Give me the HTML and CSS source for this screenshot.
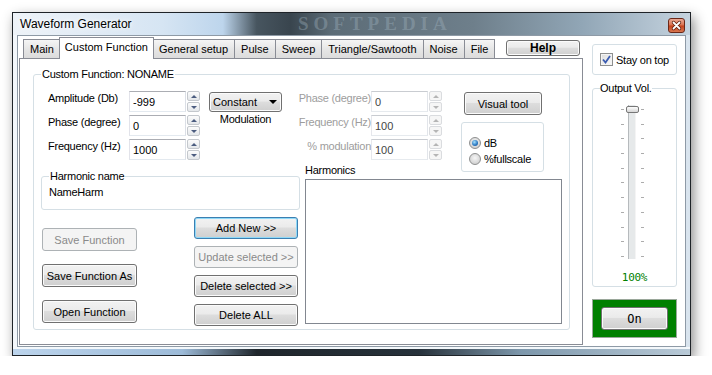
FILE: index.html
```html
<!DOCTYPE html>
<html lang="en">
<head>
    <meta charset="UTF-8">
    <meta name="viewport" content="width=device-width, initial-scale=1.0">
    <title>Waveform Generator</title>
    <link rel="stylesheet" href="styles.css">
</head>
<body>
    <div class="window">
        <div class="titlebar">
            <span class="title">Waveform Generator</span>
            <span class="watermark">SOFTPEDIA</span>
            <button class="close" title="Close">
                <svg width="15" height="13" viewBox="0 0 15 13">
                    <path d="M4.5 3.5 L10.5 9.5 M10.5 3.5 L4.5 9.5" stroke="#5a1c0c" stroke-width="3.2" stroke-linecap="round"/>
                    <path d="M4.5 3.5 L10.5 9.5 M10.5 3.5 L4.5 9.5" stroke="#fff" stroke-width="1.8" stroke-linecap="round"/>
                </svg>
            </button>
        </div>

        <div class="client">
            <div class="tabctl">
                <div class="tabstrip">
                    <span class="tab">Main</span>
                    <span class="tab active">Custom Function</span>
                    <span class="tab">General setup</span>
                    <span class="tab">Pulse</span>
                    <span class="tab">Sweep</span>
                    <span class="tab">Triangle/Sawtooth</span>
                    <span class="tab">Noise</span>
                    <span class="tab">File</span>
                    <button class="btn help">Help</button>
                </div>

                <div class="page">
                    <fieldset class="group func-group">
                        <legend>Custom Function: NONAME</legend>

                        <div class="top">
                            <div class="params">
                                <div class="param">
                                    <label>Amplitude (Db)</label>
                                    <input type="text" value="-999">
                                    <span class="spin"><i class="up"></i><i class="down"></i></span>
                                </div>
                                <div class="param">
                                    <label>Phase (degree)</label>
                                    <input type="text" value="0">
                                    <span class="spin"><i class="up"></i><i class="down"></i></span>
                                </div>
                                <div class="param">
                                    <label>Frequency (Hz)</label>
                                    <input type="text" value="1000">
                                    <span class="spin"><i class="up"></i><i class="down"></i></span>
                                </div>
                            </div>

                            <div class="modcol">
                                <button class="btn combo">Constant <i class="arrow"></i></button>
                                <span class="caption">Modulation</span>
                            </div>

                            <div class="params mod-params">
                                <div class="param">
                                    <label>Phase (degree)</label>
                                    <input type="text" value="0" disabled>
                                    <span class="spin"><i class="up"></i><i class="down"></i></span>
                                </div>
                                <div class="param">
                                    <label>Frequency (Hz)</label>
                                    <input type="text" value="100" disabled>
                                    <span class="spin"><i class="up"></i><i class="down"></i></span>
                                </div>
                                <div class="param">
                                    <label>% modulation</label>
                                    <input type="text" value="100" disabled>
                                    <span class="spin"><i class="up"></i><i class="down"></i></span>
                                </div>
                            </div>

                            <div class="viewcol">
                                <button class="btn visual">Visual tool</button>
                                <div class="box radios">
                                    <div class="radio checked"><span class="dot"></span>dB</div>
                                    <div class="radio"><span class="dot"></span>%fullscale</div>
                                </div>
                            </div>
                        </div>

                        <div class="bottom">
                            <div class="leftpart">
                                <fieldset class="group name-group">
                                    <legend>Harmonic name</legend>
                                    NameHarm
                                </fieldset>
                                <div class="actions">
                                    <div class="file-btns">
                                        <button class="btn" disabled>Save Function</button>
                                        <button class="btn">Save Function As</button>
                                        <button class="btn">Open Function</button>
                                    </div>
                                    <div class="harm-btns">
                                        <button class="btn default">Add New &gt;&gt;</button>
                                        <button class="btn" disabled>Update selected &gt;&gt;</button>
                                        <button class="btn">Delete selected &gt;&gt;</button>
                                        <button class="btn">Delete ALL</button>
                                    </div>
                                </div>
                            </div>
                            <div class="harmonics">
                                <span class="caption">Harmonics</span>
                                <div class="listbox"></div>
                            </div>
                        </div>
                    </fieldset>
                </div>
            </div>

            <div class="side">
                <div class="box stay">
                    <span class="check">
                        <svg width="11" height="11" viewBox="0 0 11 11">
                            <path d="M2 5.5 L4.5 8.5 L9 2" fill="none" stroke="#3a5bb0" stroke-width="1.8"/>
                        </svg>
                    </span>
                    Stay on top
                </div>
                <fieldset class="group vol-group">
                    <legend>Output Vol.</legend>
                    <div class="slider">
                        <span class="ticks"></span>
                        <span class="track"><span class="thumb"></span></span>
                        <span class="ticks"></span>
                    </div>
                    <div class="level">100%</div>
                </fieldset>
                <div class="power">
                    <button class="btn on">On</button>
                </div>
            </div>
        </div>
        <div class="frame-bottom"></div>
    </div>
</body>
</html>
```

FILE: styles.css
```css
* {
    box-sizing: border-box;
}
body {
    margin: 0;
    background: #fff;
    font-family: "Liberation Sans", Arial, sans-serif;
    font-size: 11px;
    letter-spacing: -0.25px;
    color: #000;
}

/* window frame */
.window {
    margin: 12px 0 0 12px;
    width: 679px;
    height: 344px;
    border: 1px solid #1e2328;
    background: linear-gradient(90deg, #f3f7fb, #e2ebf4 40%, #d9e4ee 100%);
    display: flex;
    flex-direction: column;
    box-shadow: 3px 5px 12px rgba(0, 0, 0, 0.45);
}
.titlebar {
    position: relative;
    height: 22px;
    flex: none;
    display: flex;
    align-items: center;
    padding: 0 5px 0 7px;
    overflow: hidden;
    background: linear-gradient(90deg, #eef3f8 0%, #d6e5f3 22%, #bdd5ec 31%, #47555f 36%, #39454e 41%, #5c6c77 47%, #6e7f8b 68%, #91a6b6 84%, #c5d3df 100%);
}
.title {
    position: relative;
    z-index: 1;
    font-size: 12px;
    letter-spacing: 0;
    text-shadow: 0 0 4px #fff, 0 0 8px #fff;
}
.watermark {
    position: absolute;
    left: 285px;
    top: 0;
    font: bold 19px/22px "Liberation Serif", serif;
    letter-spacing: 5px;
    color: rgba(160, 178, 190, 0.4);
}
.close {
    position: relative;
    z-index: 1;
    margin-left: auto;
    align-self: flex-start;
    margin-top: 5px;
    width: 17px;
    height: 15px;
    padding: 0;
    border: 1px solid #6b2818;
    border-radius: 3px;
    background: linear-gradient(#eaa996, #d8714f 48%, #c4401c 52%, #d8764f);
    display: flex;
    align-items: center;
    justify-content: center;
}
.frame-bottom {
    height: 8px;
    flex: none;
    border-top: 2px solid #f4f8fb;
    background: linear-gradient(90deg, #bcd4ec 0%, #9dbbd8 25%, #1f262c 36%, #27323b 60%, #7d97ab 75%, #b9cad7 100%);
}

/* client area */
.client {
    flex: 1;
    margin: 0 4px;
    border: 1px solid #8e9aa6;
    background: #fff;
    display: flex;
    padding: 1px 0 1px 1px;
}
.tabctl {
    width: 564px;
    flex: none;
    display: flex;
    flex-direction: column;
}
.tabstrip {
    height: 21px;
    flex: none;
    display: flex;
    align-items: flex-end;
    padding-left: 4px;
}
.tab {
    flex: none;
    white-space: nowrap;
    letter-spacing: 0;
    height: 19px;
    line-height: 19px;
    padding: 0 6px;
    border: 1px solid #898c95;
    border-bottom: none;
    margin-right: -1px;
    background: linear-gradient(#f5f5f5, #e6e6e6 50%, #dcdcdc);
}
.tab.active {
    position: relative;
    z-index: 1;
    height: 22px;
    line-height: 19px;
    margin: 0 -2px -1px -1px;
    padding: 0 5px;
    background: #fff;
}
.page {
    flex: 1;
    border: 1px solid #898c95;
    background: #fff;
    padding: 9px 12px 0 13px;
}

/* controls */
.btn {
    font: inherit;
    color: #000;
    padding: 0;
    white-space: nowrap;
    border: 1px solid #707070;
    border-radius: 3px;
    background: linear-gradient(#f2f2f2, #ebebeb 45%, #dddddd 50%, #cfcfcf);
    box-shadow: inset 0 0 0 1px #fbfbfb;
    cursor: default;
}
.btn.default {
    border-color: #3c7fb1;
    box-shadow: inset 0 0 0 1px #8fd9f8;
}
.btn:disabled {
    border-color: #adb2b5;
    background: #f4f4f4;
    color: #8a8a8a;
    box-shadow: none;
}
.help {
    flex: none;
    width: 74px;
    height: 16px;
    margin: 0 3px 2px auto;
    font-size: 12px;
    font-weight: bold;
    letter-spacing: 0;
    line-height: 12px;
}
.group {
    margin: 0;
    min-width: 0;
    border: 1px solid #d5dfe5;
    border-radius: 3px;
}
.group legend {
    padding: 0 1px;
    line-height: 13px;
}
.box {
    border: 1px solid #d5dfe5;
    border-radius: 3px;
}
.func-group {
    padding: 10px 7px 3px 7px;
}

.top {
    height: 73px;
    display: flex;
    align-items: flex-start;
}
.params {
    padding-left: 7px;
}
.param {
    display: flex;
    height: 21px;
    margin-bottom: 3px;
}
.param label {
    width: 81px;
    padding-top: 1px;
    line-height: 13px;
    white-space: nowrap;
}
.param input {
    width: 57px;
    height: 21px;
    padding: 0 3px;
    font: inherit;
    color: #000;
    background: #fff;
    border: 1px solid;
    border-color: #abadb3 #dbdfe6 #e3e9ef #e2e3ea;
    outline: none;
}
.spin {
    display: flex;
    flex-direction: column;
    gap: 1px;
    margin-left: 1px;
}
.spin i {
    width: 13px;
    height: 10px;
    border: 1px solid #c4c8cd;
    border-radius: 2px;
    background: linear-gradient(#fcfcfc, #e4e7ea);
    display: flex;
    align-items: center;
    justify-content: center;
}
.spin i::after {
    content: "";
    border-left: 3px solid transparent;
    border-right: 3px solid transparent;
}
.spin .up::after {
    border-bottom: 3px solid #4c5d80;
}
.spin .down::after {
    border-top: 3px solid #4c5d80;
}
.mod-params {
    padding-left: 0;
    margin-left: 15px;
}
.mod-params label {
    width: 74px;
    text-align: right;
    color: #9d9d9d;
}
.mod-params input {
    color: #444;
    border-color: #c9ccd1 #e2e5ea #e6eaee #e6e7ec;
}
.mod-params .spin i {
    border-color: #dadcdf;
    background: #f6f6f6;
}
.mod-params .spin .up::after {
    border-bottom-color: #b5b5b5;
}
.mod-params .spin .down::after {
    border-top-color: #b5b5b5;
}

.modcol {
    width: 73px;
    margin-left: 9px;
    display: flex;
    flex-direction: column;
    align-items: center;
}
.combo {
    width: 73px;
    height: 20px;
    margin-top: 1px;
    display: flex;
    align-items: center;
    justify-content: space-between;
    padding: 0 4px 0 3px;
}
.combo .arrow {
    border-left: 4px solid transparent;
    border-right: 4px solid transparent;
    border-top: 4px solid #000;
}
.caption {
    line-height: 13px;
}
.modcol .caption {
    margin-top: 1px;
}

.viewcol {
    width: 83px;
    margin-left: 19px;
}
.visual {
    width: 78px;
    height: 23px;
    margin: 1px 0 0 3px;
}
.radios {
    height: 50px;
    margin-top: 7px;
    padding: 12px 0 0 7px;
}
.radio {
    display: flex;
    align-items: center;
    height: 16px;
}
.dot {
    width: 12px;
    height: 12px;
    margin-right: 3px;
    border: 1px solid #8e8f8f;
    border-radius: 50%;
    background: radial-gradient(circle at 50% 40%, #f6f6f6, #d4d4d4 70%, #c8c8c8);
    display: flex;
    align-items: center;
    justify-content: center;
}
.radio.checked .dot::after {
    content: "";
    width: 6px;
    height: 6px;
    border-radius: 50%;
    background: radial-gradient(circle at 40% 35%, #a6e2ff, #2f7cc4 55%, #134b8a);
}

.bottom {
    display: flex;
}
.leftpart {
    width: 259px;
    margin-right: 5px;
}
.name-group {
    margin-top: 6px;
    padding: 3px 7px 10px 7px;
    line-height: 13px;
}
.actions {
    display: flex;
}
.file-btns,
.harm-btns {
    display: flex;
    flex-direction: column;
}
.file-btns {
    width: 95px;
    margin: 18px 0 0 1px;
    gap: 13px;
}
.file-btns .btn {
    height: 23px;
}
.harm-btns {
    width: 104px;
    margin: 7px 0 0 57px;
    gap: 7px;
}
.harm-btns .btn {
    height: 22px;
}
.harmonics {
    width: 257px;
    display: flex;
    flex-direction: column;
}
.listbox {
    height: 145px;
    margin-top: 2px;
    border: 1px solid #828790;
    background: #fff;
}

/* right side panel */
.side {
    flex: 1;
    padding: 7px 8px 0 9px;
    display: flex;
    flex-direction: column;
}
.stay {
    height: 31px;
    display: flex;
    align-items: center;
    padding-left: 7px;
    white-space: nowrap;
}
.check {
    width: 13px;
    height: 13px;
    margin-right: 3px;
    border: 1px solid #8e8f8f;
    background: linear-gradient(135deg, #dcdcdc, #fafafa);
    box-shadow: inset 0 0 0 1px #f4f4f4;
    display: flex;
    align-items: center;
    justify-content: center;
}
.vol-group {
    margin-top: 7px;
    padding: 0 7px 2px 7px;
}
.vol-group legend {
    padding: 0;
}
.slider {
    height: 154px;
    margin-top: 10px;
    padding-right: 4px;
    display: flex;
    justify-content: center;
}
.ticks {
    width: 3px;
    height: 148px;
    margin-top: 4px;
    background: repeating-linear-gradient(to bottom, #acacac 0, #acacac 1px, transparent 1px, transparent 14.7px);
}
.track {
    position: relative;
    width: 8px;
    margin: 0 5px 0 4px;
    background: #e6e9ea;
    border-left: 1px solid #b6babd;
    border-right: 1px solid #f4f4f4;
}
.thumb {
    position: absolute;
    left: -3px;
    top: 1px;
    width: 13px;
    height: 7px;
    border: 1px solid #777;
    border-radius: 2px;
    background: linear-gradient(#fdfdfd, #d6d6d6);
}
.level {
    margin-top: 12px;
    text-align: center;
    line-height: 13px;
    color: #008000;
    font-family: "DejaVu Sans Mono", monospace;
    font-size: 11px;
    letter-spacing: -0.3px;
}
.power {
    height: 39px;
    margin-top: 12px;
    background: #008000;
    border: 1px solid #9aa79a;
    display: flex;
    align-items: center;
    justify-content: center;
}
.on {
    width: 67px;
    height: 23px;
    font-family: "DejaVu Sans Mono", monospace;
    font-size: 12px;
    letter-spacing: 0;
}
```
